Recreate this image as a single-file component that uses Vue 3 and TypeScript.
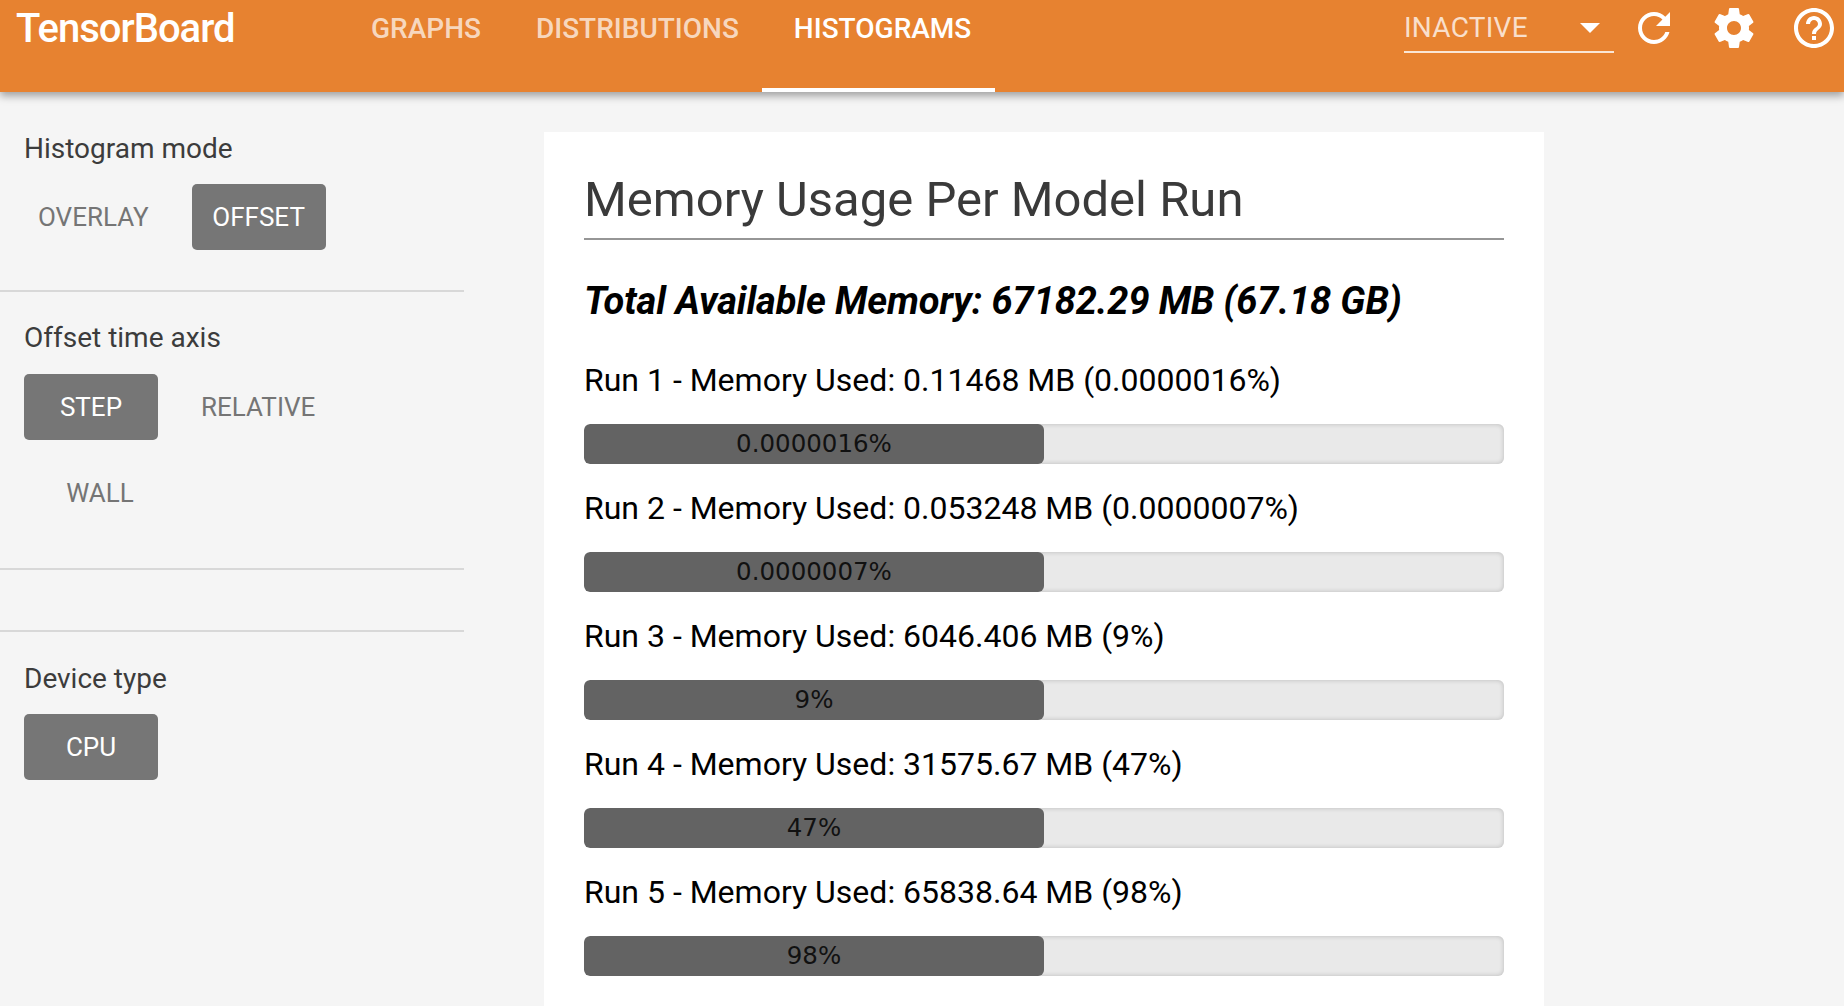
<template>
  <div class="board">
    <header class="topbar">
      <div class="logo">TensorBoard</div>
      <nav class="tabs">
        <a
          v-for="tab in tabs"
          :key="tab"
          class="tab"
          :class="{ active: tab === activeTab }"
        >{{ tab }}</a>
      </nav>
      <div class="tools">
        <div class="run-select">
          <span>INACTIVE</span>
          <i class="caret"></i>
        </div>
        <svg class="tool" viewBox="0 0 24 24"><path d="M17.65 6.35C16.2 4.9 14.21 4 12 4c-4.42 0-7.99 3.58-7.99 8s3.57 8 7.99 8c3.73 0 6.84-2.55 7.73-6h-2.08c-.82 2.33-3.04 4-5.65 4-3.31 0-6-2.69-6-6s2.69-6 6-6c1.66 0 3.14.69 4.22 1.78L13 11h7V4l-2.35 2.35z" /></svg>
        <svg class="tool" viewBox="0 0 24 24"><path d="M19.43 12.98c.04-.32.07-.64.07-.98s-.03-.66-.07-.98l2.11-1.65c.19-.15.24-.42.12-.64l-2-3.46c-.12-.22-.39-.3-.61-.22l-2.49 1c-.52-.4-1.08-.73-1.69-.98l-.38-2.65C14.46 2.18 14.25 2 14 2h-4c-.25 0-.46.18-.49.42l-.38 2.65c-.61.25-1.17.59-1.69.98l-2.49-1c-.23-.09-.49 0-.61.22l-2 3.46c-.13.22-.07.49.12.64l2.11 1.65c-.04.32-.07.65-.07.98s.03.66.07.98l-2.11 1.65c-.19.15-.24.42-.12.64l2 3.46c.12.22.39.3.61.22l2.49-1c.52.4 1.08.73 1.69.98l.38 2.65c.03.24.24.42.49.42h4c.25 0 .46-.18.49-.42l.38-2.65c.61-.25 1.17-.59 1.69-.98l2.49 1c.23.09.49 0 .61-.22l2-3.46c.12-.22.07-.49-.12-.64l-2.11-1.65zM12 15.5c-1.93 0-3.5-1.57-3.5-3.5s1.57-3.5 3.5-3.5 3.5 1.57 3.5 3.5-1.57 3.5-3.5 3.5z" /></svg>
        <svg class="tool" viewBox="0 0 24 24"><path d="M11 18h2v-2h-2v2zm1-16C6.48 2 2 6.48 2 12s4.48 10 10 10 10-4.48 10-10S17.52 2 12 2zm0 18c-4.41 0-8-3.59-8-8s3.59-8 8-8 8 3.59 8 8-3.59 8-8 8zm0-14c-2.21 0-4 1.79-4 4h2c0-1.1.9-2 2-2s2 .9 2 2c0 2-3 1.75-3 5h2c0-2.25 3-2.5 3-5 0-2.21-1.79-4-4-4z" /></svg>
      </div>
    </header>

    <div class="content">
      <aside class="sidebar">
        <section class="group group-mode">
          <h3>Histogram mode</h3>
          <div class="options">
            <button class="opt">OVERLAY</button>
            <button class="opt on">OFFSET</button>
          </div>
        </section>
        <section class="group group-axis">
          <h3>Offset time axis</h3>
          <div class="options">
            <button class="opt on">STEP</button>
            <button class="opt">RELATIVE</button>
            <button class="opt wall">WALL</button>
          </div>
        </section>
        <section class="group group-empty"></section>
        <section class="group group-device">
          <h3>Device type</h3>
          <div class="options">
            <button class="opt on">CPU</button>
          </div>
        </section>
      </aside>

      <main class="card">
        <h1>Memory Usage Per Model Run</h1>
        <h2>Total Available Memory: 67182.29 MB (67.18 GB)</h2>
        <div v-for="run in runs" :key="run.id" class="run">
          <p>Run {{ run.id }} - Memory Used: {{ run.used }} MB ({{ run.pct }})</p>
          <div class="bar">
            <div class="fill">{{ run.pct }}</div>
          </div>
        </div>
      </main>
    </div>
  </div>
</template>

<script setup lang="ts">
interface Run {
  id: number
  used: string
  pct: string
}

const tabs = ['GRAPHS', 'DISTRIBUTIONS', 'HISTOGRAMS']
const activeTab = 'HISTOGRAMS'

const runs: Run[] = [
  { id: 1, used: '0.11468', pct: '0.0000016%' },
  { id: 2, used: '0.053248', pct: '0.0000007%' },
  { id: 3, used: '6046.406', pct: '9%' },
  { id: 4, used: '31575.67', pct: '47%' },
  { id: 5, used: '65838.64', pct: '98%' },
]
</script>

<style>
html,
body {
  margin: 0;
  overflow: hidden;
}
</style>

<style scoped>
.board {
  height: 1006px;
  overflow: hidden;
  background: #f5f5f5;
  font-family: Roboto, "Liberation Sans", sans-serif;
}
.topbar {
  position: relative;
  z-index: 1;
  display: flex;
  height: 92px;
  background: #e78230;
  box-shadow: 0 4px 8px rgba(0, 0, 0, 0.35);
  color: #fff;
}
.logo {
  width: 371px;
  box-sizing: border-box;
  padding-left: 16px;
  font-size: 40px;
  font-weight: 500;
  letter-spacing: -1px;
  line-height: 57px;
}
.tabs {
  display: flex;
  flex: 1;
}
.tab {
  display: block;
  height: 92px;
  font-size: 28px;
  font-weight: 500;
  line-height: 57px;
  color: rgba(255, 255, 255, 0.7);
}
.tab + .tab {
  margin-left: 55px;
}
.tab.active {
  position: relative;
  color: #fff;
}
.tab.active::after {
  content: "";
  position: absolute;
  left: -32px;
  right: -24px;
  bottom: 0;
  height: 4px;
  background: #fff;
}
.tools {
  display: flex;
  align-items: flex-start;
  padding: 4px 6px 0 0;
}
.run-select {
  display: flex;
  justify-content: space-between;
  align-items: center;
  width: 210px;
  height: 49px;
  box-sizing: border-box;
  margin-right: 16px;
  border-bottom: 2px solid rgba(255, 255, 255, 0.8);
  font-size: 28px;
  letter-spacing: 0.25px;
  color: rgba(255, 255, 255, 0.75);
}
.caret {
  width: 0;
  height: 0;
  margin-right: 14px;
  border: 10px solid transparent;
  border-top-color: #fff;
  border-bottom: 0;
}
.tool {
  width: 48px;
  height: 48px;
  margin-left: 32px;
  fill: #fff;
}
.run-select + .tool {
  margin-left: 0;
}
.content {
  display: flex;
  align-items: flex-start;
}
.sidebar {
  width: 464px;
  flex: none;
}
.group {
  border-bottom: 2px solid #d8d8d8;
}
.group h3 {
  margin: 0;
  padding-left: 24px;
  font-size: 28px;
  font-weight: 400;
  line-height: 32px;
  color: #3c3c3c;
}
.group-mode {
  height: 157px;
  padding-top: 41px;
}
.group-axis {
  height: 246px;
  padding-top: 30px;
}
.group-empty {
  height: 60px;
}
.group-device {
  padding-top: 31px;
  border-bottom: 0;
}
.options {
  display: flex;
  flex-wrap: wrap;
  column-gap: 29px;
  padding: 20px 0 0 24px;
  width: 360px;
}
.group-mode .options,
.group-device .options {
  padding-top: 19px;
}
.opt {
  min-width: 134px;
  height: 66px;
  box-sizing: border-box;
  padding: 0 14px 1px;
  border: 0;
  border-radius: 5px;
  background: transparent;
  font-family: inherit;
  font-size: 26px;
  color: #757575;
}
.opt.on {
  background: #767676;
  color: #fff;
}
.opt.wall {
  height: 46px;
  margin: 30px 0 0 9px;
}
.card {
  width: 1000px;
  height: 900px;
  box-sizing: border-box;
  margin: 40px 0 0 80px;
  padding: 36px 40px 0;
  background: #fff;
}
.card h1 {
  margin: 0;
  height: 70px;
  border-bottom: 2px solid #969696;
  font-size: 49px;
  font-weight: 400;
  line-height: 64px;
  color: #3a3a3a;
}
.card h2 {
  margin: 39px 0 0;
  font-size: 38px;
  font-style: italic;
  font-weight: 700;
  letter-spacing: -0.1px;
  line-height: 44px;
  color: #000;
}
.run p {
  margin: 0;
  padding-top: 22px;
  height: 52px;
  font-size: 32px;
  line-height: 44px;
  color: #000;
}
.run:first-of-type p {
  padding-top: 35px;
}
.bar {
  height: 40px;
  margin-top: 14px;
  border-radius: 6px;
  background: #e9e9e9;
  box-shadow: inset 0 0 5px rgba(0, 0, 0, 0.2);
  overflow: hidden;
}
.fill {
  width: 50%;
  height: 100%;
  border-radius: 6px;
  background: #636363;
  font-family: "DejaVu Sans", sans-serif;
  font-size: 24.5px;
  line-height: 40px;
  text-align: center;
  color: #111;
}
</style>
